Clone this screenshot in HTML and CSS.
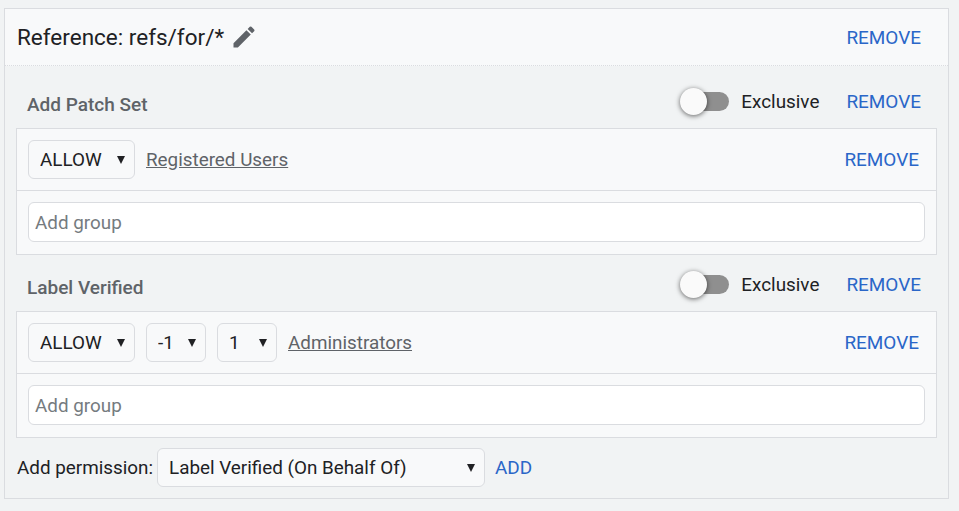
FILE: index.html
```html
<!DOCTYPE html>
<html lang="en">
<head>
<meta charset="utf-8">
<title>Reference</title>
<link rel="stylesheet" href="styles.css">
</head>
<body>
<section class="section">
  <header class="header">
    <div class="title">
      <span>Reference: refs/for/*</span>
      <svg class="edit" viewBox="0 0 24 24" width="28" height="28"><path d="M3 17.25V21h3.75L17.81 9.94l-3.75-3.75L3 17.25zM20.71 7.04a1 1 0 0 0 0-1.41l-2.34-2.34a1 1 0 0 0-1.41 0l-1.83 1.83 3.75 3.75 1.83-1.83z"/></svg>
    </div>
    <a class="link link-head">REMOVE</a>
  </header>
  <div class="content">
    <div class="perm-head perm-first">
      <h3 class="perm-title">Add Patch Set</h3>
      <div class="toggle"><span class="track"></span><span class="thumb"></span></div>
      <span class="exclusive">Exclusive</span>
      <a class="link">REMOVE</a>
    </div>
    <div class="box">
      <div class="rule">
        <select class="sel sel-action"><option>ALLOW</option></select>
        <a class="group">Registered Users</a>
        <a class="link link-rule">REMOVE</a>
      </div>
      <div class="add-row"><input class="add-input" placeholder="Add group"></div>
    </div>
    <div class="perm-head perm-next">
      <h3 class="perm-title">Label Verified</h3>
      <div class="toggle"><span class="track"></span><span class="thumb"></span></div>
      <span class="exclusive">Exclusive</span>
      <a class="link">REMOVE</a>
    </div>
    <div class="box">
      <div class="rule">
        <select class="sel sel-action"><option>ALLOW</option></select>
        <select class="sel sel-num"><option>-1</option></select>
        <select class="sel sel-num"><option>1</option></select>
        <a class="group">Administrators</a>
        <a class="link link-rule">REMOVE</a>
      </div>
      <div class="add-row"><input class="add-input" placeholder="Add group"></div>
    </div>
    <div class="add-perm">
      <label class="add-label">Add permission:</label>
      <select class="sel sel-perm"><option>Label Verified (On Behalf Of)</option></select>
      <a class="link link-add">ADD</a>
    </div>
  </div>
</section>
</body>
</html>
```
FILE: styles.css
```css
* { box-sizing: border-box; }
html, body { height: 100%; }
body {
  margin: 0;
  padding: 8px 10px 0 4px;
  background: #f1f3f4;
  font-family: Roboto, sans-serif;
  font-size: 18.85px;
  color: #202124;
  overflow: hidden;
}
.section {
  border: 1px solid #dadce0;
  background: #f1f3f4;
  height: 491px;
}
.header {
  height: 57px;
  background: #f8f9fa;
  border-bottom: 1px dotted #dadce0;
  display: flex;
  align-items: center;
  padding: 0 27px 0 12px;
  justify-content: space-between;
}
.title { display: flex; align-items: center; font-size: 22.5px; gap: 6px; }
.edit { fill: #5f6368; }
.link { color: #2a66c8; font-size: 18.95px; }
.link-head { padding-top: 1px; }
.content { padding: 0 11px; }
.perm-head {
  display: flex;
  align-items: center;
  padding: 0 16px 0 11px;
}
.perm-first { height: 62px; padding-top: 9px; }
.perm-next { height: 56px; padding-top: 3px; }
.perm-title {
  margin: 6px auto 0 0;
  font-size: 19px;
  font-weight: 500;
  color: #5f6368;
}
.toggle { position: relative; width: 49px; height: 19px; margin-right: 12px; }
.track {
  display: block;
  width: 36px;
  height: 19px;
  margin-left: 13px;
  border-radius: 10px;
  background: #8f8f8f;
}
.thumb {
  position: absolute;
  left: 0;
  top: -4px;
  width: 27px;
  height: 27px;
  border-radius: 50%;
  background: #fafafa;
  box-shadow: 0 1px 5px rgba(0,0,0,.6);
}
.exclusive { margin-right: 27px; }
.box {
  border: 1px solid #dadce0;
  background: #f8f9fa;
  height: 127px;
}
.rule {
  height: 62px;
  display: flex;
  align-items: center;
  gap: 11px;
  padding: 0 17px 0 11px;
  border-bottom: 1px solid #dadce0;
}
.sel {
  appearance: none;
  height: 39px;
  border: 1px solid #dadce0;
  border-radius: 6px;
  background-color: #f8f9fa;
  background-image: url("data:image/svg+xml,%3Csvg xmlns='http://www.w3.org/2000/svg' width='8' height='8'%3E%3Cpath d='M0 0h8L4 8z' fill='%23202124'/%3E%3C/svg%3E");
  background-repeat: no-repeat;
  background-position: right 9px center;
  color: #202124;
  font-family: Roboto, sans-serif;
  font-size: 18.85px;
  padding: 0 20px 0 11px;
}
.sel-action { width: 107px; }
.sel-num { width: 60px; }
.sel-perm { width: 328px; }
.group { color: #5f6368; text-decoration: underline; }
.link-rule { margin-left: auto; }
.add-row { padding: 11px; }
.add-input {
  display: block;
  width: 100%;
  height: 40px;
  border: 1px solid #dadce0;
  border-radius: 6px;
  background: #fff;
  font-family: Roboto, sans-serif;
  font-size: 18.85px;
  padding: 2px 6px 0;
}
.add-input::placeholder { color: #757b7f; }
.add-perm {
  display: flex;
  align-items: center;
  margin-top: 10px;
  padding-left: 1px;
}
.add-label { width: 140px; }
.link-add { margin-left: 10px; }
```
